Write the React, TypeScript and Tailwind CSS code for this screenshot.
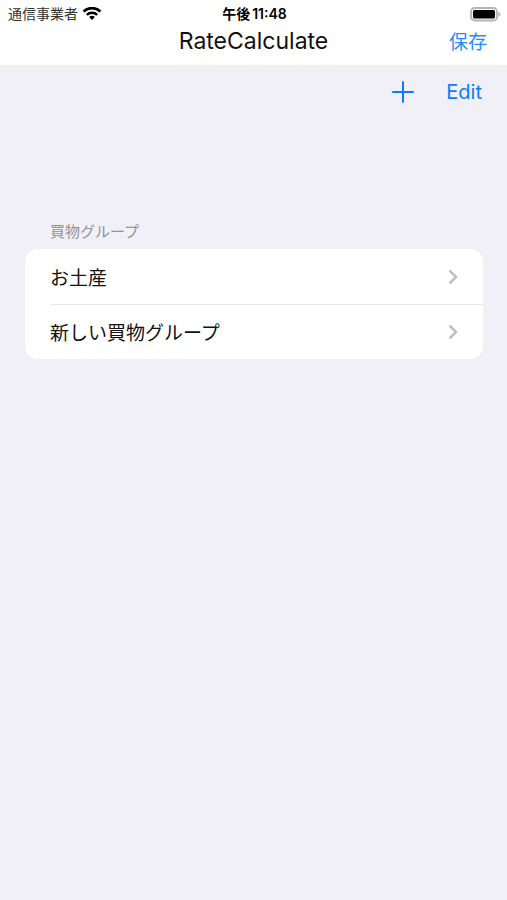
const groups = ["お土産", "新しい買物グループ"];

function WifiIcon() {
  return (
    <svg viewBox="0 0 20 14" className="h-[14px] w-5" fill="none" aria-hidden="true">
      <path d="M1.6 4.6a12 12 0 0 1 16.8 0" stroke="#000" strokeWidth="2.8" />
      <path d="M4.8 7.9a7.5 7.5 0 0 1 10.4 0" stroke="#000" strokeWidth="2.5" />
      <path d="M10 13 7.1 10.1a4.2 4.2 0 0 1 5.8 0Z" fill="#000" />
    </svg>
  );
}

function BatteryIcon() {
  return (
    <svg viewBox="0 0 32 15" className="h-[15px] w-8" fill="none" aria-hidden="true">
      <rect x="2" y="1" width="26" height="12.5" rx="3.5" stroke="#b4b4b4" strokeWidth="1.8" />
      <rect x="4" y="3" width="22" height="8.5" rx="1.5" fill="#000" />
      <path d="M29.4 4.8v5c1.3-.4 2-1.4 2-2.5s-.7-2.1-2-2.5Z" fill="#b4b4b4" />
    </svg>
  );
}

function PlusIcon() {
  return (
    <svg viewBox="0 0 22 22" className="size-[22px]" fill="none" aria-hidden="true">
      <path d="M11 1v20M1 11h20" stroke="currentColor" strokeWidth="2" strokeLinecap="round" />
    </svg>
  );
}

function ChevronIcon() {
  return (
    <svg viewBox="0 0 10 16" className="h-4 w-[10px]" fill="none" aria-hidden="true">
      <path d="m1.5 1.5 6.5 6.5-6.5 6.5" stroke="#c0c0c2" strokeWidth="2.5" />
    </svg>
  );
}

function StatusBar() {
  return (
    <div className="grid h-7 grid-cols-[1fr_auto_1fr] items-center pr-[6px] pl-2">
      <div className="flex items-center gap-1 text-sm text-[#333]">
        <span>通信事業者</span>
        <WifiIcon />
      </div>
      <div className="flex gap-0.5 text-sm font-semibold text-black">
        <span>午後</span>
        <span>11:48</span>
      </div>
      <div className="flex justify-end">
        <BatteryIcon />
      </div>
    </div>
  );
}

export default function App() {
  return (
    <div
      lang="ja"
      className="min-h-screen bg-[#f0f0f6] font-['Inter','Noto_Sans_CJK_JP',sans-serif] text-black"
    >
      {/* Navigation bar */}
      <header className="h-[65px] bg-white">
        <StatusBar />
        <div className="grid grid-cols-[1fr_auto_1fr] items-center px-5">
          <h1 className="col-start-2 text-[23px] leading-[26px] text-[#111]">RateCalculate</h1>
          <button
            type="button"
            className="justify-self-end font-['Noto_Sans_CJK_JP',sans-serif] text-[19px] leading-[26px] text-[#1f8dff]"
          >
            保存
          </button>
        </div>
      </header>

      {/* List toolbar */}
      <div className="flex h-[54px] items-center justify-end gap-8 pr-[25px] text-[#0a7cff]">
        <button type="button" aria-label="追加">
          <PlusIcon />
        </button>
        <button type="button" className="text-[20px] leading-6">
          Edit
        </button>
      </div>

      <main className="pt-[101px] pr-6 pl-[25px] font-['Noto_Sans_CJK_JP',sans-serif]">
        <h2 className="px-[25px] pb-[7px] text-[15px] leading-[22px] text-[#929297]">買物グループ</h2>
        <ul className="overflow-hidden rounded-[13px] bg-white">
          {groups.map((name, i) => (
            <li key={name} className="pl-[25px]">
              <a
                href="#group"
                className={
                  i > 0
                    ? "flex h-[55px] items-center justify-between border-t border-[#e9e9eb] pr-[25px]"
                    : "flex h-[55px] items-center justify-between pr-[25px]"
                }
              >
                <span className="text-[19px] leading-[26px] text-[#111]">{name}</span>
                <ChevronIcon />
              </a>
            </li>
          ))}
        </ul>
      </main>
    </div>
  );
}
